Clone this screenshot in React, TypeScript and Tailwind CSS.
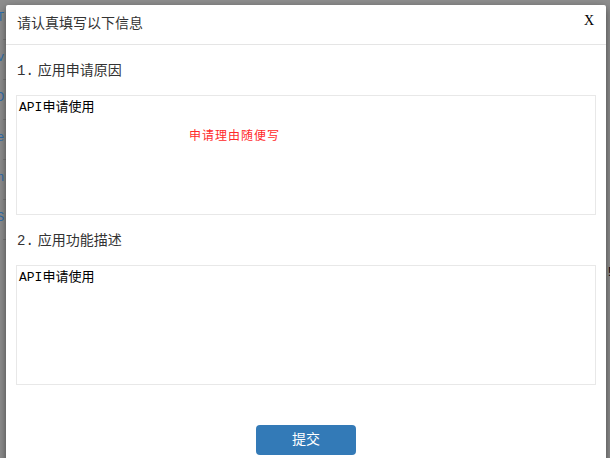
export default function App() {
  const font = { fontFamily: '"Liberation Mono", "Noto Sans CJK SC", monospace' };
  return (
    <div className="relative w-[610px] h-[458px] overflow-hidden bg-[#8e8e8e]" style={font}>
      {/* underlying page peeking at the left */}
      <div className="absolute left-0 top-0 w-[6px] h-full flex flex-col text-[#2f6fb0] text-[12px] leading-none overflow-hidden">
        {["T", "v", "D", "e", "n", "S"].map((c, i) => (
          <div key={i} className="h-[40px] pt-[12px] -ml-[3px] border-b border-dashed border-[#7a7a7a]">{c}</div>
        ))}
      </div>
      <div className="absolute left-[606px] top-[264px] text-[12px] text-black">!</div>
      {/* modal */}
      <div className="absolute left-[6px] top-[5px] w-[600px] h-[460px] bg-white shadow-[0_3px_9px_rgba(0,0,0,0.5)] rounded-t-[2px]">
        <div className="h-[40px] border-b border-[#e5e5e5] flex items-center justify-between pl-[11px] pr-[12px]">
          <span className="text-[14px] text-[#333]">请认真填写以下信息</span>
          <span className="text-[14px] text-black font-['Liberation_Serif'] -mt-[8px]">X</span>
        </div>
        <div className="px-[10px] pt-[16px]">
          <div className="text-[14px] text-[#333] leading-[20px] pl-[1px]">
            <span>1.</span>
            <span className="ml-[4px]">应用申请原因</span>
          </div>
          <div className="mt-[14px] h-[120px] border border-[#e8e8e8] relative">
            <div className="pl-[2px] pt-[4px] text-[13px] text-black leading-[16px]">API申请使用</div>
            <div className="absolute left-[172px] top-[32px] text-[12px] text-[#ff2a2a] tracking-[1px]">申请理由随便写</div>
          </div>
          <div className="mt-[16px] text-[14px] text-[#333] leading-[20px] pl-[1px]">
            <span>2.</span>
            <span className="ml-[4px]">应用功能描述</span>
          </div>
          <div className="mt-[14px] h-[120px] border border-[#e8e8e8]">
            <div className="pl-[2px] pt-[4px] text-[13px] text-black leading-[16px]">API申请使用</div>
          </div>
          <div className="flex justify-center mt-[40px]">
            <button className="w-[100px] h-[30px] rounded-[4px] bg-[#337ab7] text-white text-[14px]">提交</button>
          </div>
        </div>
      </div>
    </div>
  );
}
